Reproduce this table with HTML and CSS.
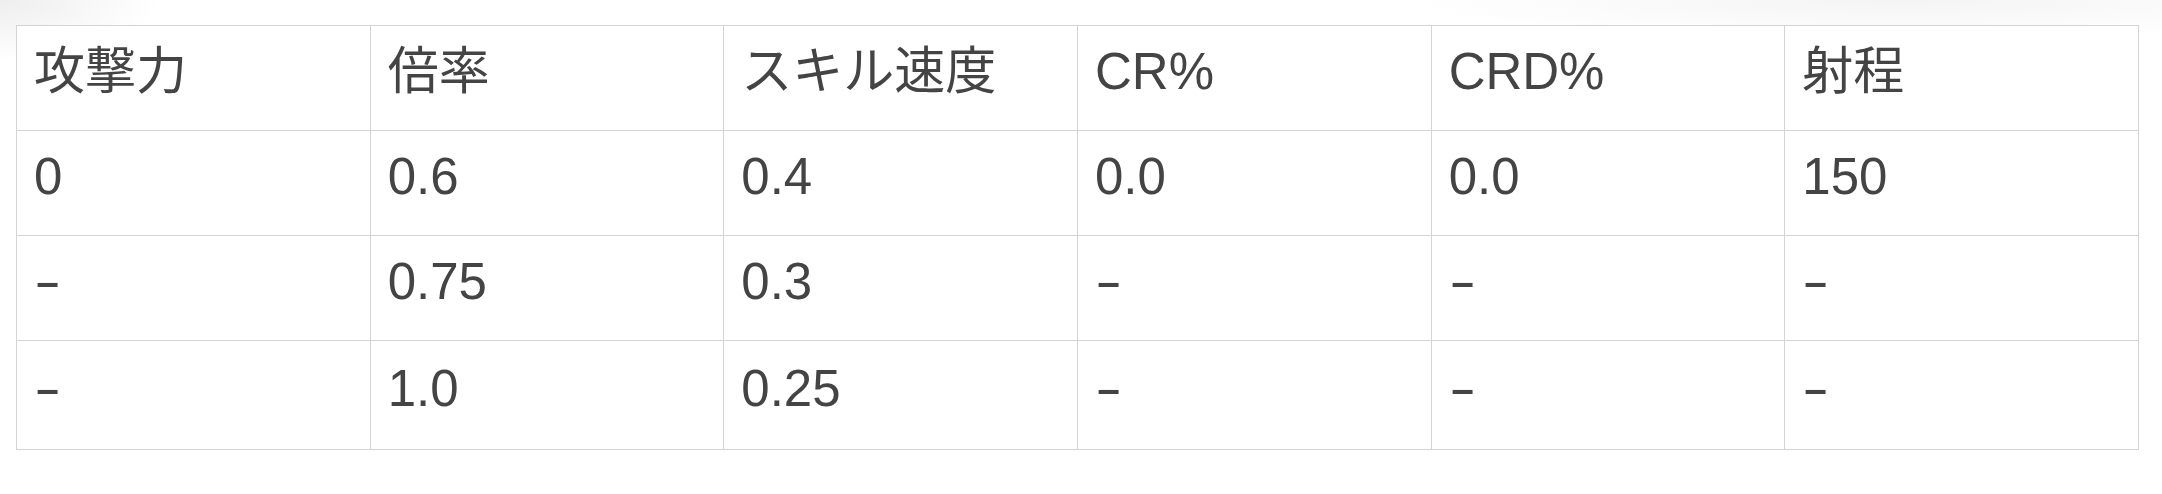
FILE: index.html
```html
<!DOCTYPE html>
<html lang="ja">
<head>
<meta charset="utf-8">
<title>Table</title>
<link rel="stylesheet" href="styles.css">
</head>
<body>
<div class="page">
  <table class="stats">
    <thead>
      <tr><th>攻撃力</th><th>倍率</th><th>スキル速度</th><th>CR%</th><th>CRD%</th><th>射程</th></tr>
    </thead>
    <tbody>
      <tr><td>0</td><td>0.6</td><td>0.4</td><td>0.0</td><td>0.0</td><td>150</td></tr>
      <tr><td><span class="dash">-</span></td><td>0.75</td><td>0.3</td><td><span class="dash">-</span></td><td><span class="dash">-</span></td><td><span class="dash">-</span></td></tr>
      <tr class="last"><td><span class="dash">-</span></td><td>1.0</td><td>0.25</td><td><span class="dash">-</span></td><td><span class="dash">-</span></td><td><span class="dash">-</span></td></tr>
    </tbody>
  </table>
</div>
</body>
</html>
```
FILE: styles.css
```css
html, body {
  margin: 0;
  padding: 0;
  background: #ffffff;
}
body {
  width: 2162px;
  height: 494px;
  overflow: hidden;
  background:
    radial-gradient(ellipse 160px 60px at 0 0, #eeeeee, rgba(255,255,255,0) 100%),
    radial-gradient(ellipse 500px 40px at 1900px 0, #f4f4f4, rgba(255,255,255,0) 100%),
    #ffffff;
}
.page {
  padding: 25px 0 0 16px;
}
.stats {
  width: 2123px;
  border-collapse: collapse;
  table-layout: fixed;
  font-family: "Liberation Sans", "Noto Sans CJK JP", sans-serif;
  font-size: 51px;
  color: #444444;
  background: #ffffff;
}
.stats th, .stats td {
  border: 1px solid #d4d4d4;
  padding: 0 17px 14px;
  height: 90px;
  text-align: left;
  font-weight: normal;
  vertical-align: middle;
  line-height: 1;
}
.stats tr.last td {
  height: 94px;
}
.dash {
  display: inline-block;
  transform: scaleX(1.6);
  transform-origin: left center;
}
```
